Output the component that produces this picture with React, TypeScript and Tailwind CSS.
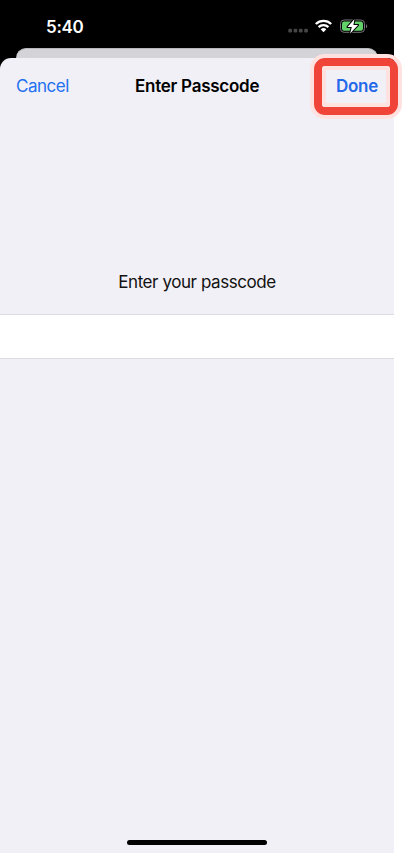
function StatusIcons() {
  return (
    <svg className="mt-[17px] ml-[203px] h-[18px] w-[82px] shrink-0" viewBox="0 0 82 18" fill="none">
      <g fill="#464648">
        <rect x="1.3" y="11.8" width="3.7" height="3.7" rx="1.2" />
        <rect x="6.6" y="11.8" width="3.7" height="3.7" rx="1.2" />
        <rect x="11.9" y="11.8" width="3.7" height="3.7" rx="1.2" />
        <rect x="17.2" y="11.8" width="3.7" height="3.7" rx="1.2" />
      </g>
      <g stroke="#fff" strokeWidth="2.3">
        <path d="M28.8 7a11.2 11.2 0 0 1 15.4 0" />
        <path d="M31.6 10.1a7 7 0 0 1 9.8 0" />
      </g>
      <path d="M33.7 12.2a4.2 4.2 0 0 1 5.6 0L36.5 15.2Z" fill="#fff" />
      <rect x="53.5" y="3" width="24" height="12.3" rx="3.6" stroke="#77777a" />
      <rect x="55" y="4.5" width="21" height="9.3" rx="2.2" fill="#62d168" />
      <path d="M79 7.3c1.6.5 1.6 3.5 0 4Z" fill="#77777a" />
      <path d="M67.5 2 60.5 9.9h4.3l-1.7 6.5 8-8.4h-4.7Z" fill="#fff" stroke="#000" strokeWidth="2" paintOrder="stroke" strokeLinejoin="round" />
    </svg>
  );
}

export default function App() {
  return (
    <div className="h-[853px] w-[402px] overflow-hidden bg-white font-['Inter','Liberation_Sans',sans-serif]">
      <div className="flex h-full w-[394px] flex-col bg-black">
        <header className="flex h-[48px] shrink-0 items-start">
          <time className="mt-[15px] ml-[46px] w-[38px] text-[17px] leading-6 font-semibold tracking-[-0.3px] whitespace-nowrap text-white">5:40</time>
          <StatusIcons />
        </header>
        <div className="mx-4 h-[10px] shrink-0 rounded-t-[10px] border-t border-[#b8b8bc] bg-[#d3d3d8]" />
        <main className="flex min-h-0 flex-1 flex-col rounded-t-[11px] bg-[#f1f0f6]">
          <nav className="relative flex h-[56px] shrink-0 items-center justify-between px-4 text-[17px] leading-6">
            <button className="w-[119px] text-left tracking-[-0.5px] text-[#2271f0]">Cancel</button>
            <h1 className="w-[124px] font-semibold tracking-[-0.25px] whitespace-nowrap text-black">Enter Passcode</h1>
            <button className="w-[119px] text-right font-semibold tracking-[-0.25px] text-[#2468ea]">Done</button>
            <div className="pointer-events-none absolute top-[-4px] left-[310px] h-[65px] w-[92px] rounded-[15px] border-4 border-[#ffe1e0]">
              <div className="h-full w-full rounded-[11px] border-8 border-[#f04438]">
                <div className="h-full w-full rounded-[3px] border-4 border-[#ffe1e0]" />
              </div>
            </div>
          </nav>
          <label htmlFor="passcode" className="mt-[156px] h-[44px] shrink-0 text-center text-[17px] leading-6 tracking-[-0.43px] text-[#111]">Enter your passcode</label>
          <input id="passcode" type="password" className="h-[45px] w-full shrink-0 border-y border-[#dcdce0] bg-white px-4 outline-none" />
          <div className="mx-auto mt-auto mb-[8px] h-[5px] w-[140px] rounded-full bg-black" />
        </main>
      </div>
    </div>
  );
}
